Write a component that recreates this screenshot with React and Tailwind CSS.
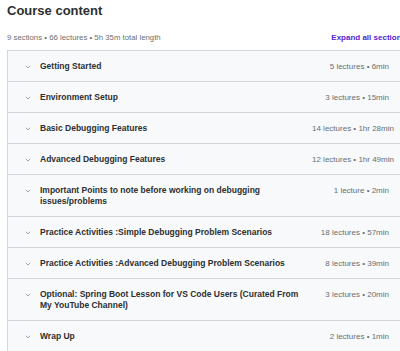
import React from "react";

const sections = [
  { title: "Getting Started", info: "5 lectures • 6min" },
  { title: "Environment Setup", info: "3 lectures • 15min" },
  { title: "Basic Debugging Features", info: "14 lectures • 1hr 28min" },
  { title: "Advanced Debugging Features", info: "12 lectures • 1hr 49min" },
  {
    title: "Important Points to note before working on debugging issues/problems",
    info: "1 lecture • 2min",
  },
  { title: "Practice Activities :Simple Debugging Problem Scenarios", info: "18 lectures • 57min" },
  { title: "Practice Activities :Advanced Debugging Problem Scenarios", info: "8 lectures • 39min" },
  {
    title: "Optional: Spring Boot Lesson for VS Code Users (Curated From My YouTube Channel)",
    info: "3 lectures • 20min",
  },
  { title: "Wrap Up", info: "2 lectures • 1min" },
];

const Chevron = () => (
  <svg width="6" height="4" viewBox="0 0 6 4" className="mt-[4px]">
    <path d="M0.8 0.8 L3 3 L5.2 0.8" fill="none" stroke="#8a8f93" strokeWidth="0.8" />
  </svg>
);

const SectionRow = ({ section }) => (
  <div className="flex items-start bg-[#f7f9fa] border-b border-[#d1d7dc] py-[9.5px] pl-[17px] pr-[16px]">
    <div className="w-[15px] shrink-0">
      <Chevron />
    </div>
    <div className="w-[272px] shrink-0 text-[8.5px] leading-[11px] font-bold text-[#2d2f31]">
      {section.title}
    </div>
    <div className="flex-1 text-right text-[8px] leading-[11px] text-[#6a6f73] whitespace-nowrap">
      {section.info}
    </div>
  </div>
);

export default function App() {
  return (
    <div
      className="w-[400px] h-[351px] overflow-hidden bg-white"
      style={{ fontFamily: '"Liberation Sans", Arial, sans-serif' }}
    >
      <div className="w-[406px] pl-[7px]">
        <h2 className="pt-[2px] text-[13px] leading-[17px] font-bold text-[#2d2f31]">
          Course content
        </h2>
        <div className="mt-[14px] flex items-baseline justify-between h-[10px] leading-[10px]">
          <span className="text-[7.8px] text-[#6a6f73]">
            9 sections • 66 lectures • 5h 35m total length
          </span>
          <span className="text-[8px] font-bold text-[#5624d0] whitespace-nowrap">
            Expand all sections
          </span>
        </div>
        <div className="mt-[7px] border-t border-l border-r border-[#d1d7dc]">
          {sections.map((s) => (
            <SectionRow key={s.title} section={s} />
          ))}
        </div>
      </div>
    </div>
  );
}
